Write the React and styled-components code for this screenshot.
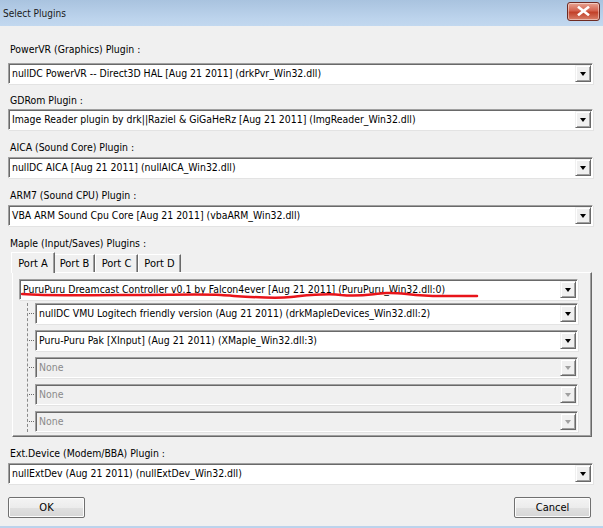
import styled, { createGlobalStyle } from "styled-components"

const Global = createGlobalStyle`
    html, body {
        margin: 0;
        padding: 0;
        background: #f0f0f0;
    }
    body {
        font-family: "DejaVu Sans Condensed", "DejaVu Sans", sans-serif;
        font-size: 10.4px;
        color: #000;
    }
`

const Window = styled.div`
    width: 603px;
    height: 528px;
    display: flex;
    flex-direction: column;
    background: #f0f0f0;
    overflow: hidden;
    border-bottom: 2px solid #bcd3ec;
    box-sizing: border-box;
`

const TitleBar = styled.div`
    height: 26px;
    flex-shrink: 0;
    display: flex;
    align-items: center;
    justify-content: space-between;
    padding: 0 3px 0 3px;
    background: linear-gradient(#a9c3df, #bcd3ec 70%, #c2d8ef);
    font-size: 10px;
    color: #1a1a1a;
`

const CloseButton = styled.div`
    width: 31px;
    height: 17px;
    margin-top: -4px;
    border: 1px solid #6e2a22;
    border-radius: 3px;
    background: linear-gradient(#e8a493, #d4634f 45%, #c24129 55%, #d9816b);
    display: flex;
    align-items: center;
    justify-content: center;
    box-shadow: inset 0 0 0 1px rgba(255,255,255,0.45);
`

const Body = styled.div`
    flex: 1;
    display: flex;
    flex-direction: column;
    padding: 0 10px 0 8px;
`

const Label = styled.div`
    height: 14px;
    line-height: 14px;
    padding-left: 2px;
    margin-top: ${p => p.$top}px;
    margin-bottom: ${p => p.$gap}px;
`

const ComboBox = styled.div`
    height: 21px;
    box-sizing: border-box;
    display: flex;
    align-items: center;
    background: ${p => (p.$disabled ? "#f0f0f0" : "#fff")};
    border-top: 1px solid #a0a0a0;
    border-left: 1px solid #a0a0a0;
    border-right: 1px solid #fff;
    border-bottom: 1px solid #fff;
    box-shadow: inset 1px 1px 0 #696969, 1px 1px 0 #e3e3e3;
    color: ${p => (p.$disabled ? "#8a8a8a" : "#000")};
    position: relative;
    flex: 1;
`

const ComboText = styled.span`
    flex: 1;
    display: block;
    height: 17px;
    line-height: 17px;
    padding-left: 3px;
    white-space: nowrap;
    overflow: hidden;
`

const ArrowButton = styled.div`
    width: 16px;
    height: 17px;
    margin-right: 1px;
    box-sizing: border-box;
    background: #f0f0f0;
    border-top: 1px solid #f0f0f0;
    border-left: 1px solid #f0f0f0;
    border-right: 1px solid #696969;
    border-bottom: 1px solid #696969;
    box-shadow: inset 1px 1px 0 #fff, inset -1px -1px 0 #a0a0a0;
    display: flex;
    align-items: center;
    justify-content: center;

    &::after {
        content: "";
        border-left: 3.5px solid transparent;
        border-right: 3.5px solid transparent;
        border-top: 4px solid ${p => (p.$disabled ? "#a0a0a0" : "#000")};
        margin-top: 1px;
    }
`

const TabStrip = styled.div`
    display: flex;
    align-items: flex-end;
    height: 21px;
    margin-top: 1px;
    padding-left: 4px;
`

const Tab = styled.div`
    height: ${p => (p.$active ? 21 : 18)}px;
    box-sizing: border-box;
    width: ${p => p.$w}px;
    justify-content: center;
    margin: 0 ${p => (p.$active ? -1 : 0)}px ${p => (p.$active ? -1 : 0)}px;
    display: flex;
    align-items: center;
    background: #f0f0f0;
    border-top: 1px solid #fff;
    border-left: 1px solid #fff;
    border-right: 1px solid #696969;
    box-shadow: inset -1px 0 0 #a0a0a0;
    position: relative;
    z-index: ${p => (p.$active ? 2 : 1)};
    font-size: 11px;
`

const TabPanel = styled.div`
    margin-left: 4px;
    margin-right: 1px;
    height: 165px;
    box-sizing: border-box;
    border-top: 1px solid #fff;
    border-left: 1px solid #fff;
    border-right: 1px solid #696969;
    border-bottom: 1px solid #696969;
    box-shadow: inset -1px -1px 0 #a0a0a0;
    padding: 6px 13px 0 6px;
    display: flex;
    flex-direction: column;
`

const MainRow = styled.div`
    display: flex;
    position: relative;
`

const Underline = styled.svg`
    position: absolute;
    left: 2px;
    top: 11px;
    pointer-events: none;
`

const Tree = styled.div`
    display: flex;
    flex-direction: column;
    gap: 6px;
    margin-top: 3px;
    margin-left: 8px;
    border-left: 1px dashed #8a8a8a;
`

const SubRow = styled.div`
    display: flex;
    align-items: center;
`

const Branch = styled.span`
    width: 5px;
    height: 1px;
    border-top: 1px dotted #6a6a6a;
    margin: 0 1px 0 1px;
`

const Footer = styled.div`
    display: flex;
    justify-content: space-between;
    margin-top: 13px;
    padding-right: 2px;
`

const Button = styled.button`
    width: 77px;
    height: 21px;
    box-sizing: border-box;
    font: inherit;
    font-size: 11px;
    background: linear-gradient(#f4f4f4, #ececec 50%, #e0e0e0 51%, #d6d6d6);
    border: 1px solid #707070;
    border-radius: 2px;
    box-shadow: inset 0 0 0 1px #fcfcfc;
    padding: 0;
    margin: 0;
    color: #000;
`

function Combo({ text, disabled }) {
    return (
        <ComboBox $disabled={disabled}>
            <ComboText>{text}</ComboText>
            <ArrowButton $disabled={disabled} />
        </ComboBox>
    )
}

const sections = [
    { label: "PowerVR (Graphics) Plugin :", value: "nullDC PowerVR -- Direct3D HAL [Aug 21 2011] (drkPvr_Win32.dll)", top: 16, gap: 7 },
    { label: "GDRom Plugin :", value: "Image Reader plugin by drk||Raziel & GiGaHeRz [Aug 21 2011] (ImgReader_Win32.dll)", top: 9, gap: 2 },
    { label: "AICA (Sound Core) Plugin :", value: "nullDC AICA [Aug 21 2011] (nullAICA_Win32.dll)", top: 10, gap: 3 },
    { label: "ARM7 (Sound CPU) Plugin :", value: "VBA ARM Sound Cpu Core [Aug 21 2011] (vbaARM_Win32.dll)", top: 10, gap: 3 },
]

const tabs = [
    { name: "Port A", w: 44, active: true },
    { name: "Port B", w: 41 },
    { name: "Port C", w: 43 },
    { name: "Port D", w: 43 },
]

const subs = [
    { text: "nullDC VMU Logitech friendly version (Aug 21 2011) (drkMapleDevices_Win32.dll:2)" },
    { text: "Puru-Puru Pak [XInput] (Aug 21 2011) (XMaple_Win32.dll:3)" },
    { text: "None", disabled: true },
    { text: "None", disabled: true },
    { text: "None", disabled: true },
]

export default function App() {
    return (
        <Window>
            <Global />
            <TitleBar>
                <span>Select Plugins</span>
                <CloseButton>
                    <svg width="13" height="10" viewBox="0 0 13 10">
                        <path d="M2 1.5 L11 8.5 M11 1.5 L2 8.5" stroke="#fff" strokeWidth="2.6" strokeLinecap="square" />
                    </svg>
                </CloseButton>
            </TitleBar>
            <Body>
                {sections.map(s => (
                    <div key={s.label}>
                        <Label $top={s.top} $gap={s.gap}>{s.label}</Label>
                        <MainRow><Combo text={s.value} /></MainRow>
                    </div>
                ))}

                <Label $top={10} $gap={0}>Maple (Input/Saves) Plugins :</Label>
                <TabStrip>
                    {tabs.map(t => (
                        <Tab key={t.name} $active={t.active} $w={t.w}>{t.name}</Tab>
                    ))}
                </TabStrip>
                <TabPanel>
                    <MainRow>
                        <Combo text="PuruPuru Dreamcast Controller v0.1 by Falcon4ever [Aug 21 2011] (PuruPuru_Win32.dll:0)" />
                        <Underline width="460" height="12" viewBox="0 0 460 12">
                            <path
                                d="M1 4 C30 6 60 5 100 5 C150 5 180 4 200 5 C230 7 250 9 270 7 C290 5 305 3 320 5 C340 7 350 4 365 3 C380 2 390 6 420 6 C435 6 445 6 456 6"
                                fill="none"
                                stroke="#e8141a"
                                strokeWidth="2.5"
                                strokeLinecap="round"
                            />
                        </Underline>
                    </MainRow>
                    <Tree>
                        {subs.map((s, i) => (
                            <SubRow key={i}>
                                <Branch />
                                <Combo text={s.text} disabled={s.disabled} />
                            </SubRow>
                        ))}
                    </Tree>
                </TabPanel>

                <Label $top={9} $gap={3}>Ext.Device (Modem/BBA) Plugin :</Label>
                <MainRow><Combo text="nullExtDev (Aug 21 2011) (nullExtDev_Win32.dll)" /></MainRow>

                <Footer>
                    <Button>OK</Button>
                    <Button>Cancel</Button>
                </Footer>
            </Body>
        </Window>
    )
}
